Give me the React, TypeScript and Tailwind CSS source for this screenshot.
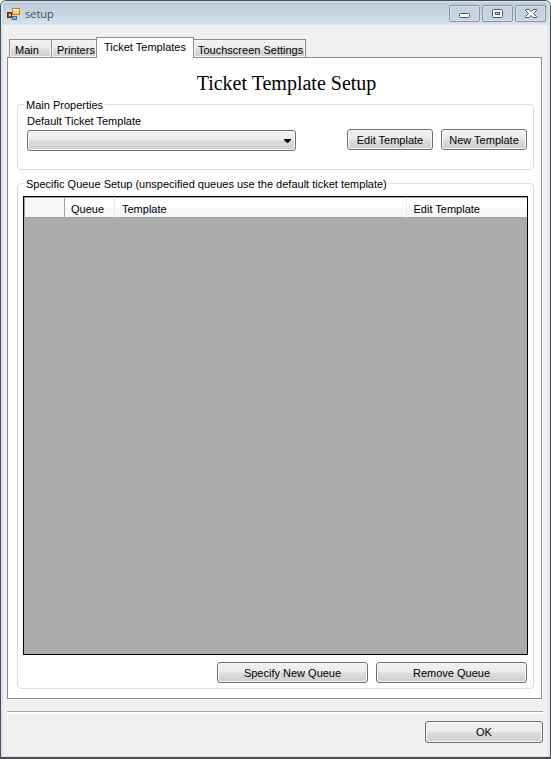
import React, { useState } from 'react';
import clsx from 'clsx';

const TABS = [
    { name: 'Main', size: 'w-[42px] pl-[5px] border-r-0' },
    { name: 'Printers', size: 'w-[46px] pl-[5px]' },
    { name: 'Ticket Templates', size: 'w-[98px] pl-[7px]' },
    { name: 'Touchscreen Settings', size: 'w-[113px] pl-1' },
];

const RAISED =
    'border border-[#707070] rounded-[3px] shadow-[inset_0_0_0_1px_#f8f8f8] bg-[linear-gradient(#f2f2f2,#ebebeb_48%,#dddddd_52%,#cfcfcf)]';

const Button = ({
    children,
    className,
}: {
    children: React.ReactNode;
    className: string;
}) => (
    <button
        type="button"
        className={clsx(RAISED, 'pt-px text-center leading-[19px]', className)}
    >
        {children}
    </button>
);

const Group = ({
    id,
    title,
    children,
    className,
}: {
    id: string;
    title: string;
    children: React.ReactNode;
    className: string;
}) => (
    <div
        role="group"
        aria-labelledby={id}
        className={clsx(
            'mr-[-2px] flex flex-col rounded-[4px] border border-[#d5dfe5]',
            className,
        )}
    >
        <div
            id={id}
            className="-mt-2 ml-1.5 h-[14px] self-start bg-white px-0.5 leading-[16px] whitespace-nowrap"
        >
            {title}
        </div>
        {children}
    </div>
);

const CaptionButton = ({
    label,
    children,
}: {
    label: string;
    children: React.ReactNode;
}) => (
    <button
        type="button"
        aria-label={label}
        className="flex h-[17px] w-[31px] items-center justify-center rounded-[2px] border border-[#8d949e] bg-[linear-gradient(#c3d0de,#c8d6e4)] shadow-[inset_0_0_0_1px_#d4dfea]"
    >
        {children}
    </button>
);

const TitleBar = () => (
    <header className="flex h-6 items-start justify-between bg-[linear-gradient(#dce6ef,#bccbda_10%,#c6d5e4_50%,#d6e3f1)] pr-0.5 pl-1">
        <div className="flex items-center gap-1 pt-[5px]">
            <svg width="14" height="14" viewBox="0 0 14 14">
                <path d="M0 1h14v13H0z" fill="#d0d7e0" />
                <rect x="5.5" y="1.5" width="7" height="6" fill="#f7cf62" stroke="#b98220" />
                <path d="M6 2h6v2h-6z" fill="#fff0b5" />
                <rect x="0.5" y="5.5" width="4" height="5" fill="#a9452b" stroke="#702317" />
                <path d="M2 7h2v2h-2z" fill="#f2c3a4" />
                <rect x="5.5" y="9.5" width="4" height="3" fill="#7eb5ef" stroke="#376fb5" />
            </svg>
            <h1 className="font-['Open_Sans','Noto_Sans',sans-serif] text-[11px] leading-[16px] text-[#4a4d52]">
                setup
            </h1>
        </div>
        <div className="flex gap-0.5 pt-1">
            <CaptionButton label="Minimize">
                <svg width="12" height="9" viewBox="0 0 12 9">
                    <rect x="0.5" y="4.5" width="10" height="4" rx="1" fill="#fff" stroke="#50536a" />
                </svg>
            </CaptionButton>
            <CaptionButton label="Maximize">
                <svg width="11" height="9" viewBox="0 0 11 9">
                    <rect x="0.5" y="0.5" width="10" height="8" rx="1" fill="#fff" stroke="#50536a" />
                    <rect x="3.5" y="3.5" width="4" height="2" fill="#c3d0de" stroke="#50536a" />
                </svg>
            </CaptionButton>
            <CaptionButton label="Close">
                <svg width="12" height="9" viewBox="0 0 12 9">
                    <path
                        d="M0.5 0.5H4L6 2.5L8 0.5H11.5V1.5L8.5 4.5L11.5 7.5V8.5H8L6 6.5L4 8.5H0.5V7.5L3.5 4.5L0.5 1.5Z"
                        fill="#fff"
                        stroke="#50536a"
                    />
                </svg>
            </CaptionButton>
        </div>
    </header>
);

const QueueGrid = () => (
    <div className="mt-1.5 flex-1 border border-black bg-[#ababab]">
        <table className="w-full table-fixed border-collapse border-t border-[#a0a0a0] bg-white text-left">
            <thead>
                <tr className="h-5 border-b border-[#a0a0a0] bg-[linear-gradient(#ffffff_50%,#f5f6f7_55%,#f8f9fa)]">
                    <td className="w-10 border-r border-l border-[#a0a0a0] bg-[#f8f8f8]" />
                    <th className="w-[50px] border-r border-[#e3e8ee] p-0 pt-0.5 pl-1.5 font-normal">
                        Queue
                    </th>
                    <th className="border-r border-[#e3e8ee] p-0 pt-0.5 pl-[7px] font-normal">
                        Template
                    </th>
                    <th className="w-[121px] p-0 pt-0.5 pl-[7px] font-normal">
                        Edit Template
                    </th>
                </tr>
            </thead>
        </table>
    </div>
);

const App = () => {
    const [activeTab, setActiveTab] = useState('Ticket Templates');

    return (
        <div className="flex min-h-screen flex-col rounded-t-[6px] border border-b-2 border-[#4d4d4f] bg-[#f0f0f0] font-['Liberation_Sans',Arial,sans-serif] text-[11px] leading-4 text-black">
            <div className="flex flex-1 flex-col overflow-hidden rounded-t-[5px] border-x-2 border-b border-[#d6e3f1]">
                <TitleBar />

                <main className="flex flex-1 flex-col pt-3 pr-[5px] pb-[13px] pl-1">
                    <div role="tablist" className="flex h-5 items-end pl-0.5">
                        {TABS.map(({ name, size }) => (
                            <button
                                key={name}
                                type="button"
                                role="tab"
                                aria-selected={name === activeTab}
                                onClick={() => setActiveTab(name)}
                                className={clsx(
                                    'border border-b-0 border-[#898c95] text-left whitespace-nowrap',
                                    size,
                                    name === activeTab
                                        ? 'z-10 -mx-px -mb-px h-[21px] bg-white pb-0.5'
                                        : 'h-[18px] bg-[linear-gradient(#f2f2f2,#ebebeb_48%,#dddddd_52%,#cfcfcf)] pt-0.5 shadow-[inset_0_0_0_1px_#f6f6f6]',
                                )}
                            >
                                {name}
                            </button>
                        ))}
                    </div>

                    <section
                        role="tabpanel"
                        className="mr-px flex flex-1 flex-col border border-[#898c95] bg-white px-[9px] pb-[9px] shadow-[1px_1px_0_#ffffff]"
                    >
                        <h2 className="pt-3 pb-2 pl-6 text-center font-['Liberation_Serif','Times_New_Roman',serif] text-[20px] leading-[26px]">
                            Ticket Template Setup
                        </h2>

                        <Group id="main-properties" title="Main Properties" className="pb-[18px]">
                            <div className="flex items-end justify-between pt-[3px] pr-1.5 pl-[9px]">
                                <div>
                                    <label
                                        htmlFor="default-template"
                                        className="mb-0.5 block leading-[14px]"
                                    >
                                        Default Ticket Template
                                    </label>
                                    <div className="relative">
                                        <select
                                            id="default-template"
                                            className={clsx(
                                                RAISED,
                                                'block h-[21px] w-[269px] appearance-none px-1',
                                            )}
                                        >
                                            <option></option>
                                        </select>
                                        <svg
                                            className="pointer-events-none absolute top-[9px] right-[5px]"
                                            width="7"
                                            height="4"
                                            viewBox="0 0 7 4"
                                        >
                                            <path d="M0 0h7v1L4 4H3L0 1z" />
                                        </svg>
                                    </div>
                                </div>
                                <div className="flex gap-2 pb-px">
                                    <Button className="h-[21px] w-[86px]">Edit Template</Button>
                                    <Button className="h-[21px] w-[86px]">New Template</Button>
                                </div>
                            </div>
                        </Group>

                        <Group
                            id="queue-setup"
                            title="Specific Queue Setup (unspecified queues use the default ticket template)"
                            className="mt-[13px] flex-1 pb-[5px]"
                        >
                            <div className="flex flex-1 flex-col px-[5px]">
                                <QueueGrid />
                                <div className="flex justify-end gap-2 pt-[7px] pr-px">
                                    <Button className="h-[21px] w-[151px]">Specify New Queue</Button>
                                    <Button className="h-[21px] w-[151px]">Remove Queue</Button>
                                </div>
                            </div>
                        </Group>
                    </section>

                    <hr className="mt-3 h-[3px] border-t border-[#a0a0a0] bg-white" />
                    <div className="flex justify-end pt-[7px]">
                        <Button className="h-[22px] w-[118px]">OK</Button>
                    </div>
                </main>
            </div>
        </div>
    );
};

export default App;
